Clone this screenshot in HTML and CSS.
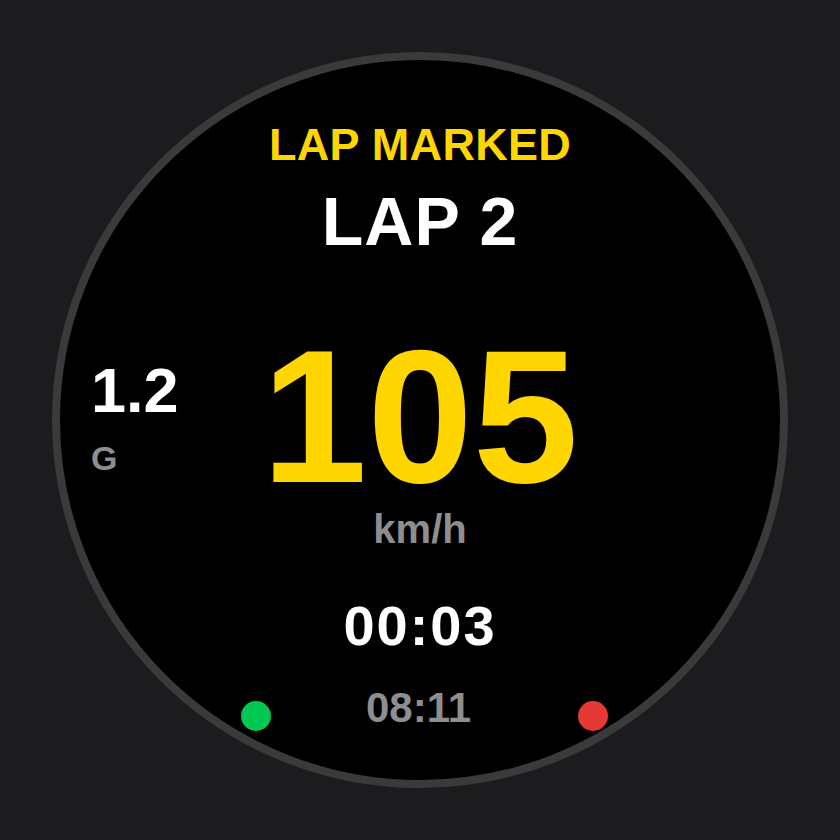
FILE: index.html
```html
<!DOCTYPE html>
<html>
<head>
<meta charset="utf-8">
<link rel="stylesheet" href="styles.css">
</head>
<body>
<div class="watch">
  <div class="face">
    <div class="status">LAP MARKED</div>
    <div class="lap">LAP 2</div>
    <div class="middle">
      <div class="side">
        <div class="g-value">1.2</div>
        <div class="g-unit">G</div>
      </div>
      <div class="speed">105</div>
      <div class="spacer"></div>
    </div>
    <div class="unit">km/h</div>
    <div class="elapsed">00:03</div>
    <div class="bottom">
      <span class="dot dot-green"></span>
      <span class="clock">08:11</span>
      <span class="dot dot-red"></span>
    </div>
  </div>
</div>
</body>
</html>
```

FILE: styles.css
```css
html, body {
  margin: 0;
  padding: 0;
}
body {
  width: 840px;
  height: 840px;
  background: #1c1c1e;
  display: flex;
  align-items: center;
  justify-content: center;
  font-family: "Liberation Sans", Arial, sans-serif;
  font-weight: 700;
}
.watch {
  width: 720px;
  height: 720px;
  border: 8px solid #3a3a3c;
  border-radius: 50%;
  background: #000;
  overflow: hidden;
}
.face {
  display: flex;
  flex-direction: column;
  align-items: center;
  padding-top: 62px;
  line-height: 1;
}
.status {
  color: #ffd600;
  font-size: 45px;
  letter-spacing: 0.3px;
}
.lap {
  color: #fff;
  font-size: 68px;
  letter-spacing: 1px;
  margin-top: 20px;
}
.middle {
  width: 100%;
  display: grid;
  grid-template-columns: 1fr auto 1fr;
  margin-top: 66px;
}
.side {
  padding-left: 31px;
  padding-top: 38px;
  display: flex;
  flex-direction: column;
  align-items: flex-start;
}
.g-value {
  color: #fff;
  font-size: 63px;
}
.g-unit {
  color: #8e8e8e;
  font-size: 34px;
  margin-top: 19px;
}
.speed {
  color: #ffd600;
  font-size: 190px;
  line-height: 0.9;
  margin-top: 10px;
}
.unit {
  color: #8e8e8e;
  font-size: 40px;
  margin-top: 7px;
}
.elapsed {
  color: #fff;
  font-size: 56px;
  letter-spacing: 2px;
  margin-top: 49px;
}
.bottom {
  display: flex;
  align-items: flex-end;
  margin-top: 33px;
  margin-left: 9px;
}
.clock {
  color: #8e8e8e;
  font-size: 42px;
  margin: 0 107px 0 95px;
}
.dot {
  width: 30px;
  height: 30px;
  border-radius: 50%;
  margin-bottom: -2px;
}
.dot-green { background: #00c853; }
.dot-red { background: #e53935; }
```
